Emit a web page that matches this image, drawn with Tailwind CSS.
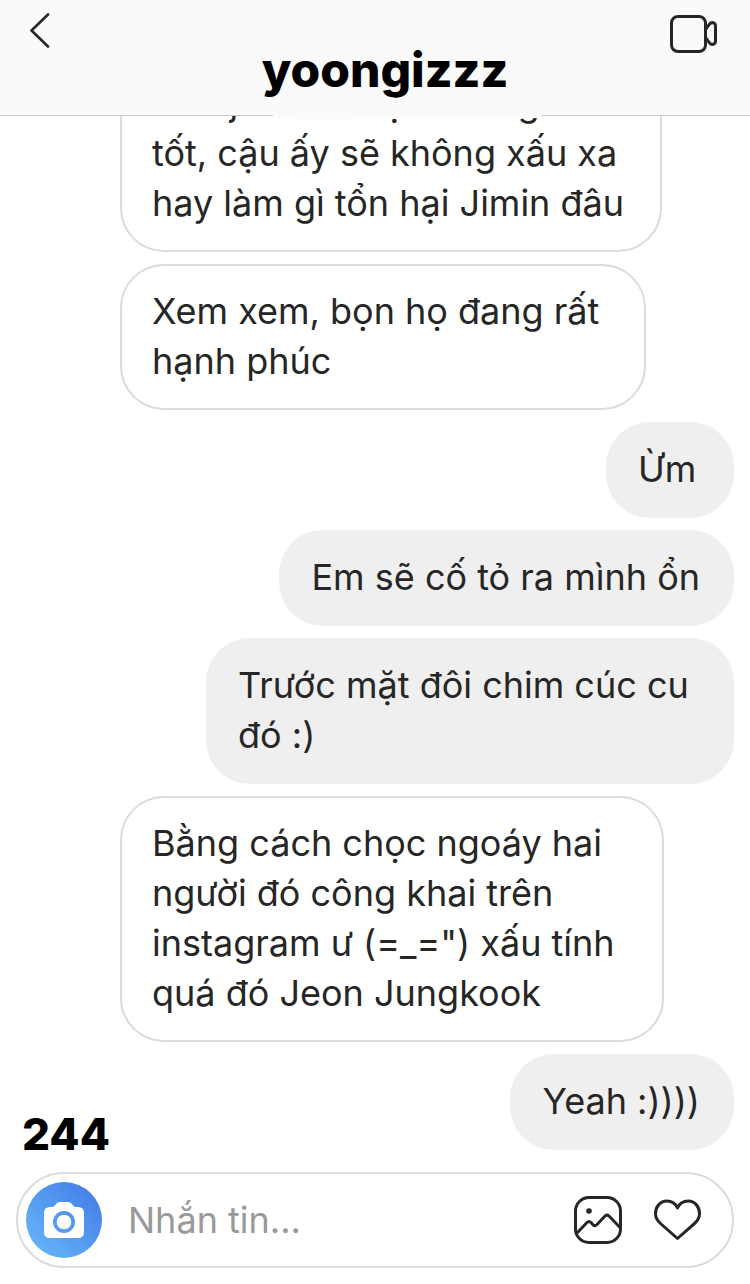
<!DOCTYPE html>
<html lang="vi">
<head>
<meta charset="utf-8">
<meta name="viewport" content="width=device-width, initial-scale=1">
<title>yoongizzz</title>
<script src="https://cdn.jsdelivr.net/npm/@tailwindcss/browser@4"></script>
</head>
<body class="flex h-screen flex-col bg-white font-[Inter,'Noto_Sans',sans-serif] text-[36px] leading-[50px] text-[#262626]">
  <header class="relative flex shrink-0 items-start border-b border-[#c8c8c8] bg-[#fafafa]">
    <button type="button" aria-label="Quay lại" class="w-[100px] pt-3 pl-7">
      <svg class="h-9 w-6" viewBox="0 0 24 36" fill="none" stroke="currentColor" stroke-width="2.6" stroke-linecap="round" stroke-linejoin="round"><path d="M20 2.500L3.500 18.500L20 34.500"/></svg>
    </button>
    <h1 class="flex-1 pt-10 pb-[15px] text-center text-[48px] leading-[60px] font-extrabold text-black">yoongizzz</h1>
    <button type="button" aria-label="Gọi video" class="w-20 pt-3">
      <svg class="h-11 w-12" viewBox="0 0 48 44" fill="none" stroke="currentColor" stroke-width="3" stroke-linejoin="round"><rect x="1.500" y="4.500" width="34" height="35" rx="6.500"/><path d="M35.500 17.500L39.500 12.200C41.500 9.500 45.500 10.500 45.500 14V29C45.500 32.500 41.500 33.500 39.500 30.800L35.500 25.500"/></svg>
    </button>
    <svg class="absolute top-[114px] left-[270px] h-2 w-[274px]" viewBox="0 0 274 8" preserveAspectRatio="none" fill="#fcfcfc"><path d="M0 0H274L268 4L200 5L160 4L100 5L50 7L10 5Z"/></svg>
  </header>

  <main class="flex min-h-0 flex-1 flex-col justify-end gap-3 overflow-hidden pr-4 pb-[22px]">
    <p class="ml-[120px] w-[542px] self-start rounded-[44px] border-2 border-[#dbdbdb] pt-5 pb-[22px] pl-[30px]">Anh jin mến họ là cũng tốt<br>tốt, cậu ấy sẽ không xấu xa<br>hay làm gì tổn hại Jimin đâu</p>
    <p class="ml-[120px] w-[526px] self-start rounded-[44px] border-2 border-[#dbdbdb] pt-5 pb-[22px] pl-[30px]">Xem xem, bọn họ đang rất<br>hạnh phúc</p>
    <p class="min-w-32 self-end rounded-[44px] bg-[#efefef] pt-[22px] pr-[34px] pb-6 pl-8">Ừm</p>
    <p class="self-end rounded-[44px] bg-[#efefef] pt-[22px] pr-[34px] pb-6 pl-8">Em sẽ cố tỏ ra mình ổn</p>
    <p class="w-[528px] self-end rounded-[44px] bg-[#efefef] pt-[22px] pb-6 pl-8">Trước mặt đôi chim cúc cu<br>đó :)</p>
    <p class="ml-[120px] w-[544px] self-start rounded-[44px] border-2 border-[#dbdbdb] pt-5 pb-[22px] pl-[30px]">Bằng cách chọc ngoáy hai<br>người đó công khai trên<br>instagram ư (=_=") xấu tính<br>quá đó Jeon Jungkook</p>
    <div class="flex items-end justify-between pl-[22px]">
      <span class="-mb-1.5 text-[44px] leading-[44px] font-extrabold text-black">244</span>
      <p class="rounded-[44px] bg-[#efefef] pt-[22px] pr-[34px] pb-6 pl-8">Yeah :))))</p>
    </div>
  </main>

  <footer class="shrink-0 px-4 pb-4">
    <form class="flex h-24 items-center rounded-full border-2 border-[#dbdbdb] pr-[30px] pl-2">
      <button type="button" aria-label="Máy ảnh" class="flex size-[76px] shrink-0 items-center justify-center rounded-full bg-linear-to-tr from-[#6cbafa] to-[#4078e4]">
        <svg class="h-9 w-10" viewBox="0 0 40 36" fill="white"><path fill-rule="evenodd" d="M6 5H8.500C11 5 12 0 16 0H24C28 0 29 5 31.500 5H34Q40 5 40 11V30Q40 36 34 36H6Q0 36 0 30V11Q0 5 6 5ZM20 9A11 11 0 1 0 20 31A11 11 0 1 0 20 9Z"/><circle cx="20" cy="20" r="7.300"/></svg>
      </button>
      <input type="text" aria-label="Nhắn tin" placeholder="Nhắn tin..." class="ml-[26px] min-w-0 flex-1 bg-transparent outline-none placeholder:text-[#999999]">
      <button type="button" aria-label="Thư viện ảnh" class="shrink-0">
        <svg class="size-12" viewBox="0 0 48 48" fill="none" stroke="currentColor" stroke-width="3" stroke-linejoin="round"><rect x="1.500" y="1.500" width="45" height="45" rx="13.500"/><circle cx="15" cy="15" r="2.800" fill="currentColor" stroke="none"/><path d="M3 37L13 26.500Q15 24.300 17 26.500L19 28.800Q21 30.500 23 28.500L31 20Q33 18.200 35 20L46 31.500"/></svg>
      </button>
      <button type="button" aria-label="Thích" class="ml-8 shrink-0">
        <svg class="h-12 w-12" viewBox="0 0 48 48" fill="none" stroke="currentColor" stroke-width="3" stroke-linejoin="round"><path d="M23.500 42.500L6.500 27.500C3 24.500 1.500 21 1.500 17.500C1.500 10.500 6.500 5 12.800 5C17.500 5 21.500 7.500 23.500 12C25.500 7.500 29.500 5 34.200 5C40.500 5 45.500 10.500 45.500 17.500C45.500 21 44 24.500 40.500 27.500Z"/></svg>
      </button>
    </form>
  </footer>
</body>
</html>
